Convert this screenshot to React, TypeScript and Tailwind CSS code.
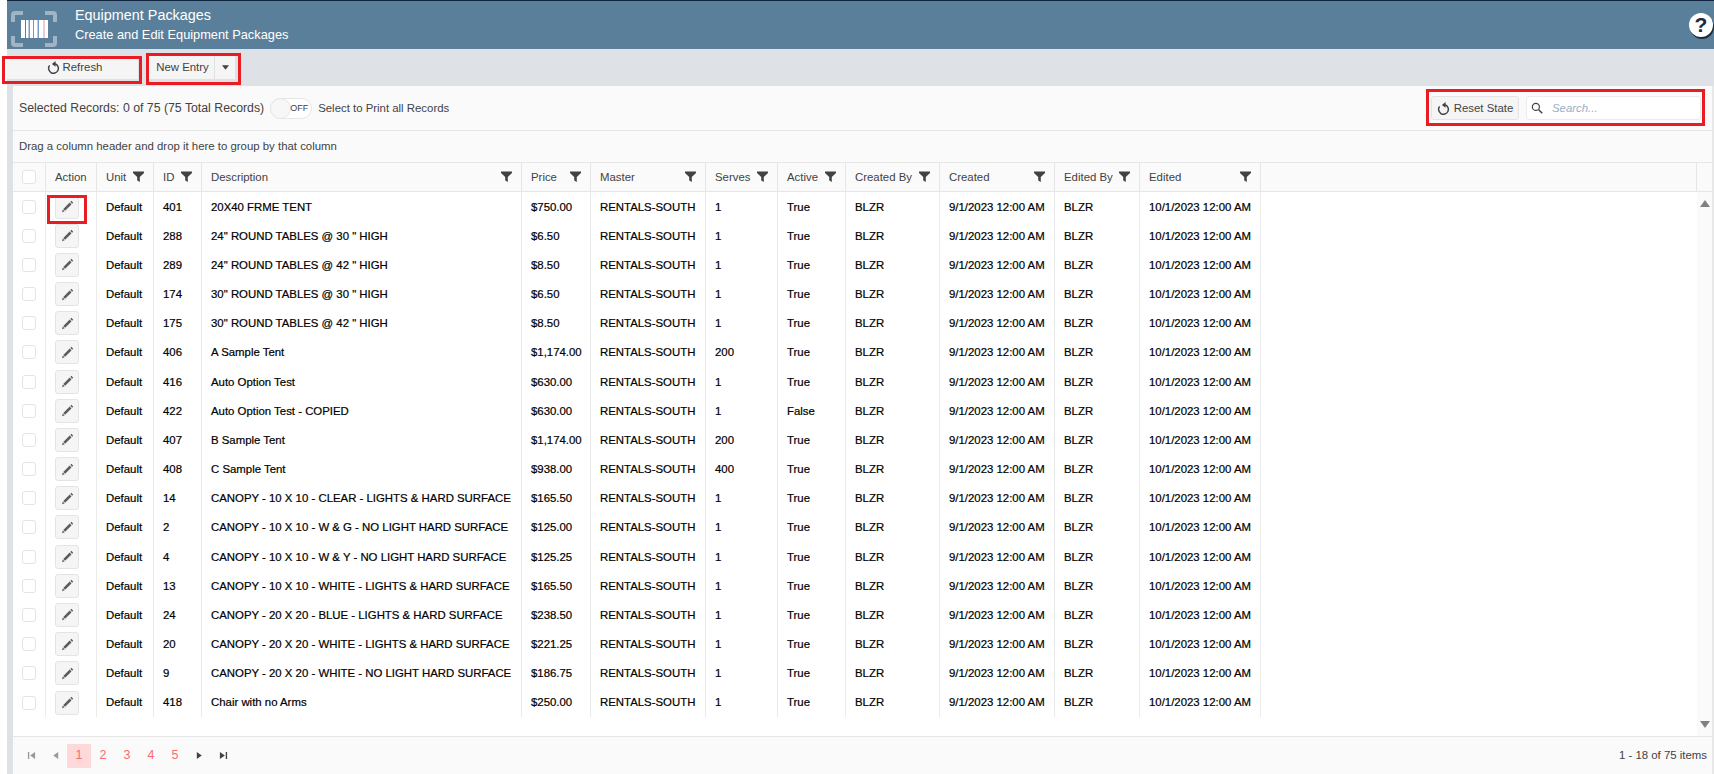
import React from "react";

const cols: [string, string, boolean][] = [
  ["Action", "w-[51px]", false],
  ["Unit", "w-[57px]", true],
  ["ID", "w-[48px]", true],
  ["Description", "w-[320px]", true],
  ["Price", "w-[69px]", true],
  ["Master", "w-[115px]", true],
  ["Serves", "w-[72px]", true],
  ["Active", "w-[68px]", true],
  ["Created By", "w-[94px]", true],
  ["Created", "w-[115px]", true],
  ["Edited By", "w-[85px]", true],
  ["Edited", "w-[121px]", true],
];

const rows: [string, string, string, string, string][] = [
  ["401", "20X40 FRME TENT", "$750.00", "1", "True"],
  ["288", '24" ROUND TABLES @ 30 " HIGH', "$6.50", "1", "True"],
  ["289", '24" ROUND TABLES @ 42 " HIGH', "$8.50", "1", "True"],
  ["174", '30" ROUND TABLES @ 30 " HIGH', "$6.50", "1", "True"],
  ["175", '30" ROUND TABLES @ 42 " HIGH', "$8.50", "1", "True"],
  ["406", "A Sample Tent", "$1,174.00", "200", "True"],
  ["416", "Auto Option Test", "$630.00", "1", "True"],
  ["422", "Auto Option Test - COPIED", "$630.00", "1", "False"],
  ["407", "B Sample Tent", "$1,174.00", "200", "True"],
  ["408", "C Sample Tent", "$938.00", "400", "True"],
  ["14", "CANOPY - 10 X 10 - CLEAR - LIGHTS & HARD SURFACE", "$165.50", "1", "True"],
  ["2", "CANOPY - 10 X 10 - W & G - NO LIGHT HARD SURFACE", "$125.00", "1", "True"],
  ["4", "CANOPY - 10 X 10 - W & Y - NO LIGHT HARD SURFACE", "$125.25", "1", "True"],
  ["13", "CANOPY - 10 X 10 - WHITE - LIGHTS & HARD SURFACE", "$165.50", "1", "True"],
  ["24", "CANOPY - 20 X 20 - BLUE - LIGHTS & HARD SURFACE", "$238.50", "1", "True"],
  ["20", "CANOPY - 20 X 20 - WHITE - LIGHTS & HARD SURFACE", "$221.25", "1", "True"],
  ["9", "CANOPY - 20 X 20 - WHITE - NO LIGHT HARD SURFACE", "$186.75", "1", "True"],
  ["418", "Chair with no Arms", "$250.00", "1", "True"],
];

function Filter() {
  return (
    <svg viewBox="0 0 12 12" className="w-[11px] h-[11px] shrink-0 ml-auto mt-[-2px] text-[#424242]" fill="currentColor">
      <path d="M0 0.5h12v1.6L7.4 6.6V12L4.6 10.4V6.6L0 2.1z" />
    </svg>
  );
}

function Reload() {
  return (
    <svg viewBox="0 0 16 16" className="w-[13px] h-[13px] shrink-0" fill="none" stroke="#424242" strokeWidth="1.8">
      <path d="M3.2 5.4A6 6 0 1 0 10 3.4" />
      <path d="M10.5 0L10.5 7L6 3.6z" fill="#424242" stroke="none" />
    </svg>
  );
}

function Pencil() {
  return (
    <svg viewBox="0 0 12 12" className="w-[13px] h-[13px]" fill="#5c5c5c">
      <path d="M9.6 0.8l1.7 1.7-1 1-1.7-1.7zM8 2.4l1.7 1.7-5.9 5.9-1.7-1.7zM1.7 8.7l1.7 1.7-2.5 0.8z" />
    </svg>
  );
}

function Check() {
  return <span className="block w-[14px] h-[14px] rounded-[3px] border border-[#e4e4e4] bg-white" />;
}

function Nav({ d }: { d: string }) {
  return (
    <span className="w-[24px] h-[24px] flex items-center justify-center">
      <svg viewBox="0 0 10 10" className="w-[9px] h-[9px]" fill="currentColor">
        <path d={d} />
      </svg>
    </span>
  );
}

function Red({ className }: { className: string }) {
  return <div className={"absolute border-[3px] border-[#e91c23] pointer-events-none " + className} />;
}

export default function App() {
  return (
    <div className="relative w-[1714px] h-[774px] overflow-hidden bg-white font-['Liberation_Sans',Arial,sans-serif] text-[11.4px] text-[#424242]">
      <div className="ml-[7px] h-[774px] flex flex-col">
        <header className="h-[49px] shrink-0 bg-[#5a7f9b] border-t border-t-[#10253f] flex items-center relative">
          <svg viewBox="0 0 46 36" className="w-[46px] h-[36px] ml-[4px] mt-[8px] shrink-0">
            <g fill="none" stroke="#9fb4c4" strokeWidth="4">
              <path d="M2 11V4a2 2 0 0 1 2-2H12" />
              <path d="M34 2h8a2 2 0 0 1 2 2V11" />
              <path d="M2 25v7a2 2 0 0 0 2 2H12" />
              <path d="M34 34h8a2 2 0 0 0 2-2V25" />
            </g>
            <rect x="10" y="9" width="27" height="18" fill="#ffffff" />
            <g>
              <rect x="14" y="9" width="1" height="18" fill="#5a7f9b" />
              <rect x="17.5" y="9" width="1.5" height="18" fill="#6f9fd0" />
              <rect x="22" y="9" width="1" height="18" fill="#7f8fc0" />
              <rect x="26.5" y="9" width="1.5" height="18" fill="#6f9fd0" />
              <rect x="32.5" y="9" width="1" height="18" fill="#d99aa8" />
            </g>
          </svg>
          <div className="ml-[18px] text-white leading-[20px]">
            <div className="text-[14.4px]">Equipment Packages</div>
            <div className="text-[12.8px]">Create and Edit Equipment Packages</div>
          </div>
          <div className="ml-auto mr-[1px] mt-[-1px] w-[24px] h-[24px] rounded-full bg-white flex items-center justify-center text-[#1c2a3a] font-bold text-[21px] leading-none shadow-[1px_2px_0_#1d2b38]">
            ?
          </div>
        </header>

        <div className="h-[37px] shrink-0 bg-[#dee2e6] flex items-start">
          <button className="w-[131px] h-[23px] mt-[7px] pl-[4px] bg-[#f5f5f5] flex items-center justify-center gap-[3px] text-[#424242]">
            <Reload />
            Refresh
          </button>
          <div className="w-[86px] h-[23px] ml-[11px] mt-[7px] bg-[#f5f5f5] flex items-center">
            <span className="w-[66px] h-full pl-[2px] flex items-center justify-center border-r border-r-[#e0e0e0]">New Entry</span>
            <span className="flex-1 flex items-center justify-center">
              <svg viewBox="0 0 8 5" className="w-[7px] h-[5px]" fill="#424242"><path d="M0 0h8L4 5z" /></svg>
            </span>
          </div>
        </div>

        <div className="flex-1 min-h-0 flex">
          <div className="w-[6px] shrink-0 bg-[#dee2e6]" />
          <main className="flex-1 min-w-0 flex flex-col bg-[#fafafa] border-r-2 border-r-[#e8e8e8]">
            <div className="h-[45px] shrink-0 flex items-center pl-[6px] border-b border-b-[#e6e6e6]">
              <span className="text-[12.3px] mt-[1px]">Selected Records: 0 of 75 (75 Total Records)</span>
              <span className="relative w-[42px] h-[21px] ml-[6px] rounded-full border border-[#e6e6e6] bg-white">
                <span className="absolute left-[-1px] top-[-1px] w-[21px] h-[21px] rounded-full border border-[#e6e6e6] bg-[#f7f7f7]" />
                <span className="absolute right-[3px] top-[3px] text-[9px] leading-[13px]">OFF</span>
              </span>
              <span className="ml-[6px] mt-[1px]">Select to Print all Records</span>
              <button className="ml-auto w-[88px] h-[24px] pt-[1px] rounded-[3px] border border-[#e4e4e4] bg-[#f5f5f5] flex items-center justify-center gap-[4px]">
                <Reload />
                Reset State
              </button>
              <div className="w-[175px] h-[24px] ml-[7px] mr-[11px] rounded-[3px] border border-[#ececec] bg-white flex items-center pl-[4px]">
                <svg viewBox="0 0 16 16" className="w-[12px] h-[12px] shrink-0" fill="none" stroke="#424242" strokeWidth="1.6">
                  <circle cx="6.5" cy="6.5" r="4.7" />
                  <path d="M10 10l5 5" strokeWidth="2" />
                </svg>
                <span className="ml-[9px] mt-[1px] italic text-[#9aaec4]">Search...</span>
              </div>
            </div>
            <div className="h-[32px] shrink-0 flex items-center pl-[6px] border-b border-b-[#e6e6e6]">
              Drag a column header and drop it here to group by that column
            </div>
            <div className="h-[29px] shrink-0 flex border-b border-b-[#e6e6e6]">
              <div className="w-[33px] shrink-0 flex items-center justify-center border-r border-r-[#e6e6e6]">
                <Check />
              </div>
              {cols.map(([name, w, f]) => (
                <div key={name} className={"shrink-0 flex items-center pl-[9px] pr-[9px] whitespace-nowrap border-r border-r-[#e6e6e6] " + w}>
                  <span className="mt-[1px]">{name}</span>
                  {f && <Filter />}
                </div>
              ))}
              <div className="flex-1 border-r border-r-[#e6e6e6]" />
              <div className="w-[15px] shrink-0" />
            </div>
            <div className="flex-1 min-h-0 flex bg-white">
              <div className="flex-1 min-w-0">
                {rows.map((r) => {
                  const vals = ["", "Default", r[0], r[1], r[2], "RENTALS-SOUTH", r[3], r[4], "BLZR", "9/1/2023 12:00 AM", "BLZR", "10/1/2023 12:00 AM"];
                  return (
                    <div key={r[0]} className="h-[29.18px] flex text-black [-webkit-text-stroke:0.2px_#000000]">
                      <div className="w-[33px] shrink-0 flex items-center justify-center border-r border-r-[#ebebeb]">
                        <Check />
                      </div>
                      {cols.map(([name, w], i) => (
                        <div key={name} className={"shrink-0 flex items-center whitespace-nowrap border-r border-r-[#ebebeb] pl-[9px] " + w}>
                          {i === 0 ? (
                            <span className="w-[24px] h-[24px] rounded-[3px] border border-[#e4e4e4] bg-[#f5f5f5] flex items-center justify-center">
                              <Pencil />
                            </span>
                          ) : (
                            <span className="mt-[1px]">{vals[i]}</span>
                          )}
                        </div>
                      ))}
                    </div>
                  );
                })}
              </div>
              <div className="w-[15px] shrink-0 bg-[#fafafa] flex flex-col items-center justify-between pt-[8px] pb-[8px] text-[#808080]">
                <svg viewBox="0 0 10 7" className="w-[10px] h-[7px]" fill="currentColor"><path d="M5 0l5 7H0z" /></svg>
                <svg viewBox="0 0 10 7" className="w-[10px] h-[7px]" fill="currentColor"><path d="M0 0h10L5 7z" /></svg>
              </div>
            </div>
            <footer className="h-[38px] shrink-0 border-t border-t-[#e6e6e6] flex items-center pl-[6px] pr-[5px]">
              <span className="text-[#999999] flex">
                <Nav d="M1 1h1.5v8H1zM9 1v8L3.5 5z" />
                <Nav d="M8 1v8L2.5 5z" />
              </span>
              <span className="w-[24px] h-[24px] bg-[#fdd9d9] text-[#ff6b6b] flex items-center justify-center text-[12.5px]">1</span>
              {["2", "3", "4", "5"].map((n) => (
                <span key={n} className="w-[24px] h-[24px] text-[#ff6b6b] flex items-center justify-center text-[12.5px]">{n}</span>
              ))}
              <span className="text-[#424242] flex">
                <Nav d="M2 1v8L7.5 5z" />
                <Nav d="M1 1v8L6.5 5zM7.5 1H9v8H7.5z" />
              </span>
              <span className="ml-auto">1 - 18 of 75 items</span>
            </footer>
          </main>
        </div>
      </div>

      <Red className="left-[2px] top-[56px] w-[140px] h-[28px]" />
      <Red className="left-[146px] top-[53px] w-[95px] h-[32px]" />
      <Red className="left-[1426px] top-[89px] w-[279px] h-[37px]" />
      <Red className="left-[47px] top-[195px] w-[40px] h-[29px]" />
    </div>
  );
}
